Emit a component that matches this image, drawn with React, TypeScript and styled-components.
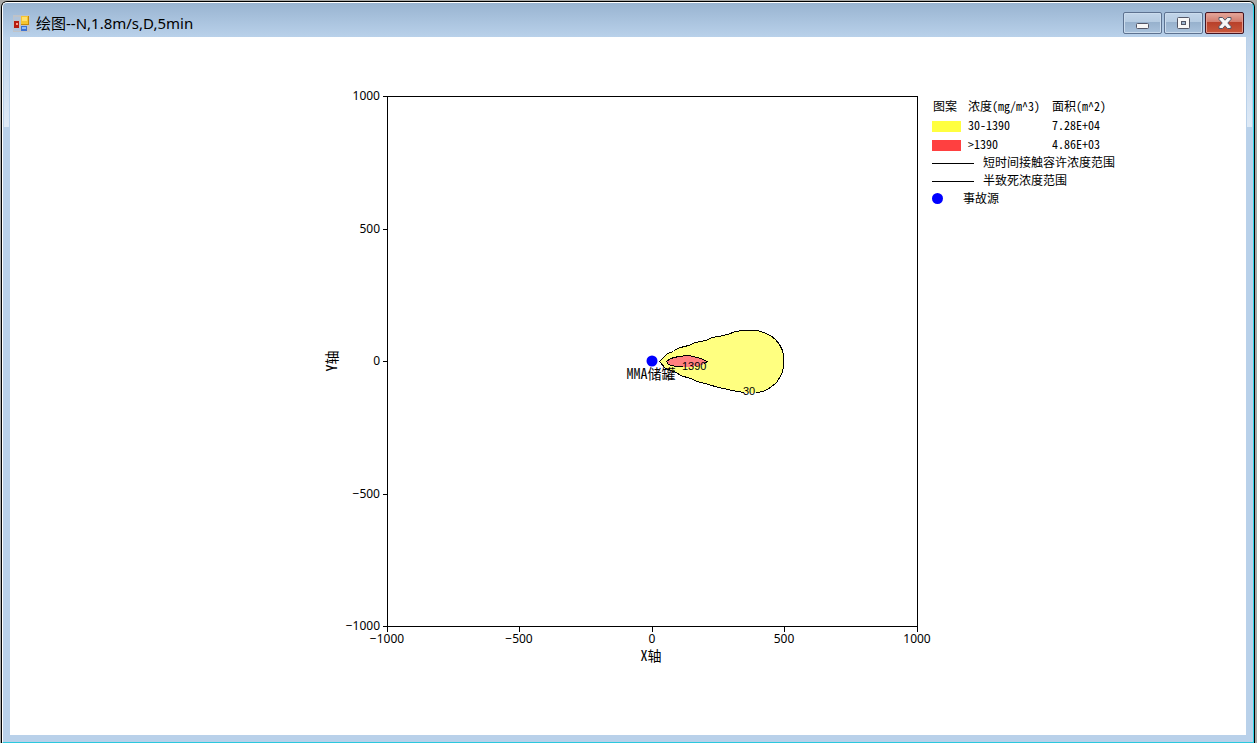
import React from 'react';
import styled, { createGlobalStyle } from 'styled-components';

const GlobalStyle = createGlobalStyle`
  * { box-sizing: border-box; }
  html, body { margin: 0; }
  body { background: #a9a9a7; color: #000; }
`;

const Desktop = styled.div`
  min-height: 100vh;
  display: flex;
  padding: 1px 2px 0 1px;
`;

const Frame = styled.div`
  flex: 1;
  display: flex;
  background: #000;
  padding: 1px 1px 0 1px;
  border-radius: 6px 6px 0 0;
`;

const WindowBody = styled.main`
  flex: 1;
  min-width: 0;
  display: flex;
  flex-direction: column;
  border: 1px solid #fff;
  border-right-color: #2bd3e8;
  border-bottom-color: #2bc8de;
  border-radius: 5px 5px 0 0;
  padding: 0 7px 7px;
  background:
    linear-gradient(#99b4d1, #b9d1ea 34px, transparent 34px) top / 100% 34px no-repeat,
    linear-gradient(#bcd2ea, #dfeaf6) 1px 34px / 5px 90px no-repeat,
    linear-gradient(#bcd2ea, #dfeaf6) calc(100% - 1px) 34px / 5px 90px no-repeat,
    #b9d1ea;
`;

const TitleBar = styled.header`
  height: 34px;
  padding: 0 2px 0 3px;
  display: flex;
  align-items: center;
  gap: 6px;
`;

const Title = styled.h1`
  flex: 1;
  margin: 0;
  padding-top: 6px;
  font: 400 15px/20px "Noto Sans", "Noto Sans CJK SC", sans-serif;
`;

const AppIcon = styled.svg`
  width: 17px;
  height: 17px;
  margin-top: 6px;
`;

const Buttons = styled.div`
  display: flex;
  gap: 2px;
  margin-top: 6px;
`;

const CaptionButton = styled.button<{ $danger?: boolean }>`
  width: 39px;
  height: 22px;
  padding: 0;
  display: grid;
  place-items: center;
  border: 1px solid ${p => (p.$danger ? '#431422' : '#5d7290')};
  border-radius: 2px;
  box-shadow: inset 0 0 0 1px ${p => (p.$danger ? '#e59b8d' : '#cbdced')};
  background: ${p => p.$danger
    ? 'linear-gradient(#e3a89d, #d2796a 46%, #b8402a 47%, #c9583c)'
    : 'linear-gradient(#c2d5e9, #b5cbe1 46%, #97b1cd 47%, #a9c2dc)'};
`;

const Canvas = styled.section`
  flex: 1;
  background: #fff;
  display: grid;
  grid-template-columns: 1fr 608px 1fr;
  padding: 47px 0;
  align-items: start;
  font-family: "Noto Sans CJK SC", sans-serif;
  font-feature-settings: "hwid";
`;

const Chart = styled.svg`
  grid-column: 2;
  width: 608px;
  height: 580px;
  overflow: visible;
  font-size: 14px;
`;

const TickLabel = styled.text`
  font: 12px "Noto Sans", sans-serif;
`;

const ContourLabel = styled.text`
  font: 11px "Liberation Sans", sans-serif;
`;

const Legend = styled.aside`
  padding-top: 13px;
  font-size: 12px;
  line-height: 18px;
  white-space: nowrap;
`;

const LegendTable = styled.table`
  border-collapse: collapse;
  th, td { padding: 0 0 0 1px; text-align: left; font-weight: 400; line-height: 18px; }
  th { height: 18px; }
  td { height: 19px; }
  td:first-child { padding: 0; }
  th:first-child, td:first-child { width: 35px; }
  th:nth-child(2) { width: 84px; }
`;

const Swatch = styled.div<{ $color: string }>`
  width: 29px;
  height: 11px;
  margin-top: 3px;
  background: ${p => p.$color};
`;

const LegendRow = styled.div`
  height: 18px;
  display: flex;
  align-items: center;
`;

const LineKey = styled.div`
  width: 42px;
  height: 1px;
  margin: 2px 9px 0 0;
  background: #000;
`;

const DotKey = styled.div`
  width: 11px;
  height: 11px;
  margin-right: 20px;
  border-radius: 50%;
  background: #00f;
`;

const SIZE = 530;
const RANGE = [-1000, -500, 0, 500, 1000];
const toPx = (v: number) => Math.floor(((v + 1000) / 2000) * SIZE);
const label = (v: number) => String(v).replace('-', '−');

const outerArea =
  'M272 265L275 262L280 257L286 255L288 253L293 251L301 249L308 246L318 244L325 241L331 240L340 238L348 235L355 234L370 234L376 236L383 239L388 243L392 248L395 254L396 259L396 271L394 278L389 286L383 291L376 295L369 296L357 296L350 295L331 291L321 288L310 285L303 282L293 279L289 276L278 272Z';
const outerLine =
  'M357 296L350 295L331 291L321 288L310 285L303 282L293 279L289 276L278 272L272 265L275 262L280 257L286 255L288 253L293 251L301 249L308 246L318 244L325 241L331 240L340 238L348 235L355 234L370 234L376 236L383 239L388 243L392 248L395 254L396 259L396 271L394 278L389 286L383 291L376 295L369 296';
const innerArea =
  'M279 265L283 262L291 260L300 259L306 260L313 262L320 265L316 268L306 270L288 270L281 268Z';
const innerLine =
  'M295 270L288 270L281 268L279 265L283 262L291 260L300 259L306 260L313 262L320 265L317 267';

function Plot() {
  return (
    <Chart viewBox="-63 -12 608 580" role="img" aria-label="浓度分布图">
      <g transform="translate(.5 .5)" fill="none" stroke="#000" shapeRendering="crispEdges">
        <rect width={SIZE} height={SIZE} />
        {RANGE.map(v => (
          <path key={v} d={`M${toPx(v)} ${SIZE}v5M-5 ${SIZE - toPx(v)}h5`} />
        ))}
        <path d={outerArea} fill="#ffff80" stroke="none" />
        <path d={innerArea} fill="#ff8080" stroke="none" />
        <path d={outerLine} />
        <path d={innerLine} />
      </g>
      {RANGE.map(v => (
        <g key={v}>
          <TickLabel x={toPx(v)} y={547} textAnchor="middle">{label(v)}</TickLabel>
          <TickLabel x={-7} y={SIZE - toPx(v) + 4} textAnchor="end">{label(v)}</TickLabel>
        </g>
      ))}
      <text x={264} y={565} textAnchor="middle">X轴</text>
      <text transform="translate(-50 265) rotate(-90)" textAnchor="middle">Y轴</text>
      <circle cx={265} cy={265} r={5.5} fill="#00f" />
      <text x={264} y={283} textAnchor="middle">MMA储罐</text>
      <ContourLabel x={295} y={274}>1390</ContourLabel>
      <ContourLabel x={356} y={299}>30</ContourLabel>
    </Chart>
  );
}

export default function App() {
  return (
    <>
      <GlobalStyle />
      <Desktop>
        <Frame>
          <WindowBody>
            <TitleBar>
              <AppIcon viewBox="0 0 17 17" aria-hidden="true">
                <rect width="17" height="17" fill="#bfc3c8" />
                <path d="M1 2h6v3H1zM1 13h6v3H1z" fill="#b1c4da" />
                <rect x="8" y="1" width="8" height="9" fill="#c88b08" />
                <rect x="8" y="1" width="7" height="8" fill="#f6c52f" />
                <rect x="9" y="2" width="5" height="4" fill="#ffe06c" />
                <rect x="1" y="6" width="5" height="7" fill="#b51b0d" />
                <rect x="3" y="8" width="2" height="2" fill="#ff9b85" />
                <rect x="8" y="11" width="6" height="5" fill="#3c70d0" />
                <rect x="9" y="12" width="4" height="2" fill="#8ebcf9" />
              </AppIcon>
              <Title>绘图--N,1.8m/s,D,5min</Title>
              <Buttons>
                <CaptionButton aria-label="最小化">
                  <svg width="14" height="14" viewBox="0 0 14 14">
                    <rect x=".5" y="7.5" width="12" height="5" rx="1" fill="#f7f7f7" stroke="#535666" />
                  </svg>
                </CaptionButton>
                <CaptionButton aria-label="还原">
                  <svg width="14" height="14" viewBox="0 0 14 14">
                    <rect x=".5" y="1.5" width="12" height="11" rx="1" fill="#f7f7f7" stroke="#535666" />
                    <rect x="4.5" y="5.5" width="4" height="3" fill="#9db5cf" stroke="#535666" />
                  </svg>
                </CaptionButton>
                <CaptionButton $danger aria-label="关闭">
                  <svg width="14" height="14" viewBox="0 0 14 14">
                    <path d="M1 1.5h3.5L7 4.2l2.5-2.7H13v2L9.8 7l3.2 3.5v2H9.5L7 9.8l-2.5 2.7H1v-2L4.2 7 1 3.5z" fill="#f7f7f7" stroke="#535666" strokeLinejoin="round" />
                  </svg>
                </CaptionButton>
              </Buttons>
            </TitleBar>
            <Canvas>
              <Plot />
              <Legend>
                <LegendTable>
                  <thead>
                    <tr><th>图案</th><th>浓度(mg/m^3)</th><th>面积(m^2)</th></tr>
                  </thead>
                  <tbody>
                    <tr><td><Swatch $color="#ffff40" /></td><td>30-1390</td><td>7.28E+04</td></tr>
                    <tr><td><Swatch $color="#ff4040" /></td><td>&gt;1390</td><td>4.86E+03</td></tr>
                  </tbody>
                </LegendTable>
                <LegendRow><LineKey />短时间接触容许浓度范围</LegendRow>
                <LegendRow><LineKey />半致死浓度范围</LegendRow>
                <LegendRow><DotKey />事故源</LegendRow>
              </Legend>
            </Canvas>
          </WindowBody>
        </Frame>
      </Desktop>
    </>
  );
}
